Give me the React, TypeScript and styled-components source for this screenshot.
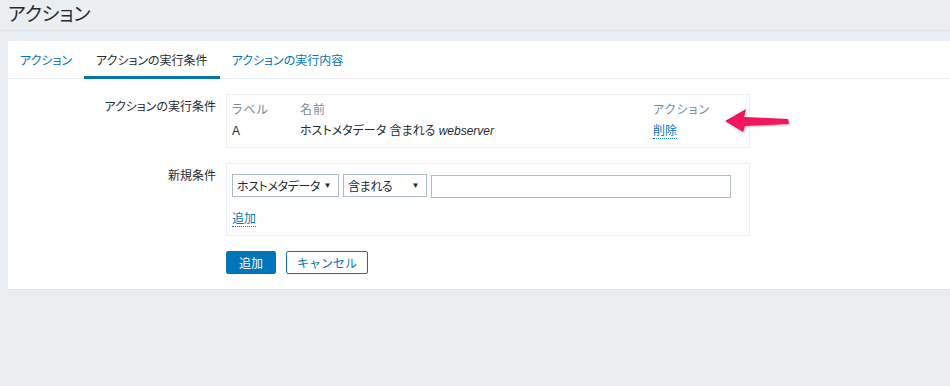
import React from 'react'
import styled, { createGlobalStyle } from 'styled-components'

const Global = createGlobalStyle`
  html, body {
    margin: 0;
    padding: 0;
    background: #ebeef0;
  }
  body {
    font-family: "Liberation Sans", "Noto Sans CJK JP", sans-serif;
    font-size: 12px;
    color: #1f2c33;
    font-feature-settings: "palt";
  }
`

const Header = styled.div`
  height: 31px;
  border-bottom: 1px solid #dde3e6;
  padding-left: 8px;
  box-sizing: border-box;
  display: flex;
  align-items: center;
`

const Title = styled.h1`
  margin: 0;
  font-size: 19px;
  font-weight: normal;
  line-height: 26px;
  color: #1f2c33;
`

const Panel = styled.div`
  position: relative;
  margin: 10px 0 0 8px;
  background: #fff;
  border-bottom: 1px solid #dce2e5;
  padding-bottom: 15px;
`

const Tabs = styled.ul`
  display: flex;
  margin: 0;
  padding: 0;
  list-style: none;
  border-bottom: 1px solid #ebeef0;
  height: 37px;
`

const Tab = styled.li<{ $active?: boolean }>`
  padding: 0 12px;
  display: flex;
  align-items: center;
  color: ${(p) => (p.$active ? '#1f2c33' : '#0275b8')};
  border-bottom: 3px solid ${(p) => (p.$active ? '#0275b8' : 'transparent')};
  margin-bottom: -1px;
  padding-top: 2px;
`

const Form = styled.div`
  display: grid;
  grid-template-columns: 208px 524px;
  column-gap: 10px;
  row-gap: 15px;
  padding-top: 15px;
`

const Label = styled.div<{ $top: number }>`
  text-align: right;
  padding-top: ${(p) => p.$top}px;
  line-height: 14px;
`

const Box = styled.div`
  border: 1px solid #ebeef0;
  padding: 5px;
`

const CondTable = styled.table`
  width: 100%;
  border-collapse: collapse;
  th, td {
    text-align: left;
    padding: 0;
    font-weight: normal;
    line-height: 14px;
  }
  th {
    color: #768d99;
    letter-spacing: 1px;
    padding: 3px 0 7px;
  }
  td {
    padding-bottom: 4px;
  }
`

const Link = styled.span`
  color: #0275b8;
  border-bottom: 1px dotted #0275b8;
  cursor: pointer;
`

const NewBox = styled(Box)`
  padding: 10px 5px 8px;
  display: flex;
  flex-direction: column;
  gap: 11px;
  align-items: flex-start;
`

const Fields = styled.div`
  display: flex;
  gap: 4px;
`

const Select = styled.div<{ $w: number }>`
  width: ${(p) => p.$w}px;
  height: 23px;
  box-sizing: border-box;
  border: 1px solid #acbbc2;
  display: flex;
  align-items: center;
  justify-content: space-between;
  padding: 0 7px 0 4px;
  font-size: 12px;
  letter-spacing: -0.4px;
  white-space: nowrap;
`

const Caret = styled.span`
  font-size: 8px;
  color: #1f2c33;
`

const Input = styled.div`
  width: 300px;
  height: 23px;
  box-sizing: border-box;
  border: 1px solid #acbbc2;
  margin-top: 1px;
`

const Buttons = styled.div`
  display: flex;
  gap: 10px;
`

const Button = styled.button<{ $primary?: boolean }>`
  height: 23px;
  width: ${(p) => (p.$primary ? 50 : 82)}px;
  padding: 0;
  font-family: inherit;
  font-size: 12px;
  border-radius: 2px;
  border: 1px solid #0275b8;
  background: ${(p) => (p.$primary ? '#0275b8' : '#fff')};
  color: ${(p) => (p.$primary ? '#fff' : '#0275b8')};
`

const Arrow = styled.svg`
  position: absolute;
  left: 704px;
  top: 63px;
  filter: drop-shadow(1px 1px 1px rgba(0, 0, 0, 0.25));
`

export default function App() {
  return (
    <>
      <Global />
      <Header>
        <Title>アクション</Title>
      </Header>
      <Panel>
        <Tabs>
          <Tab>アクション</Tab>
          <Tab $active>アクションの実行条件</Tab>
          <Tab>アクションの実行内容</Tab>
        </Tabs>
        <Form>
          <Label $top={6}>アクションの実行条件</Label>
          <Box>
            <CondTable>
              <thead>
                <tr>
                  <th style={{ width: 68 }}>ラベル</th>
                  <th style={{ width: 353 }}>名前</th>
                  <th>アクション</th>
                </tr>
              </thead>
              <tbody>
                <tr>
                  <td>A</td>
                  <td>
                    ホストメタデータ 含まれる <i>webserver</i>
                  </td>
                  <td>
                    <Link>削除</Link>
                  </td>
                </tr>
              </tbody>
            </CondTable>
          </Box>

          <Label $top={6}>新規条件</Label>
          <NewBox>
            <Fields>
              <Select $w={107}>
                ホストメタデータ <Caret>▼</Caret>
              </Select>
              <Select $w={84}>
                含まれる <Caret>▼</Caret>
              </Select>
              <Input />
            </Fields>
            <Link>追加</Link>
          </NewBox>

          <div />
          <Buttons>
            <Button $primary>追加</Button>
            <Button>キャンセル</Button>
          </Buttons>
        </Form>
        <Arrow width="80" height="32" viewBox="712 105 80 32">
          <polygon
            points="725,122 746,110 744,118 788,120 789,125 745,127 743,133"
            fill="#f2175c"
          />
        </Arrow>
      </Panel>
    </>
  )
}
